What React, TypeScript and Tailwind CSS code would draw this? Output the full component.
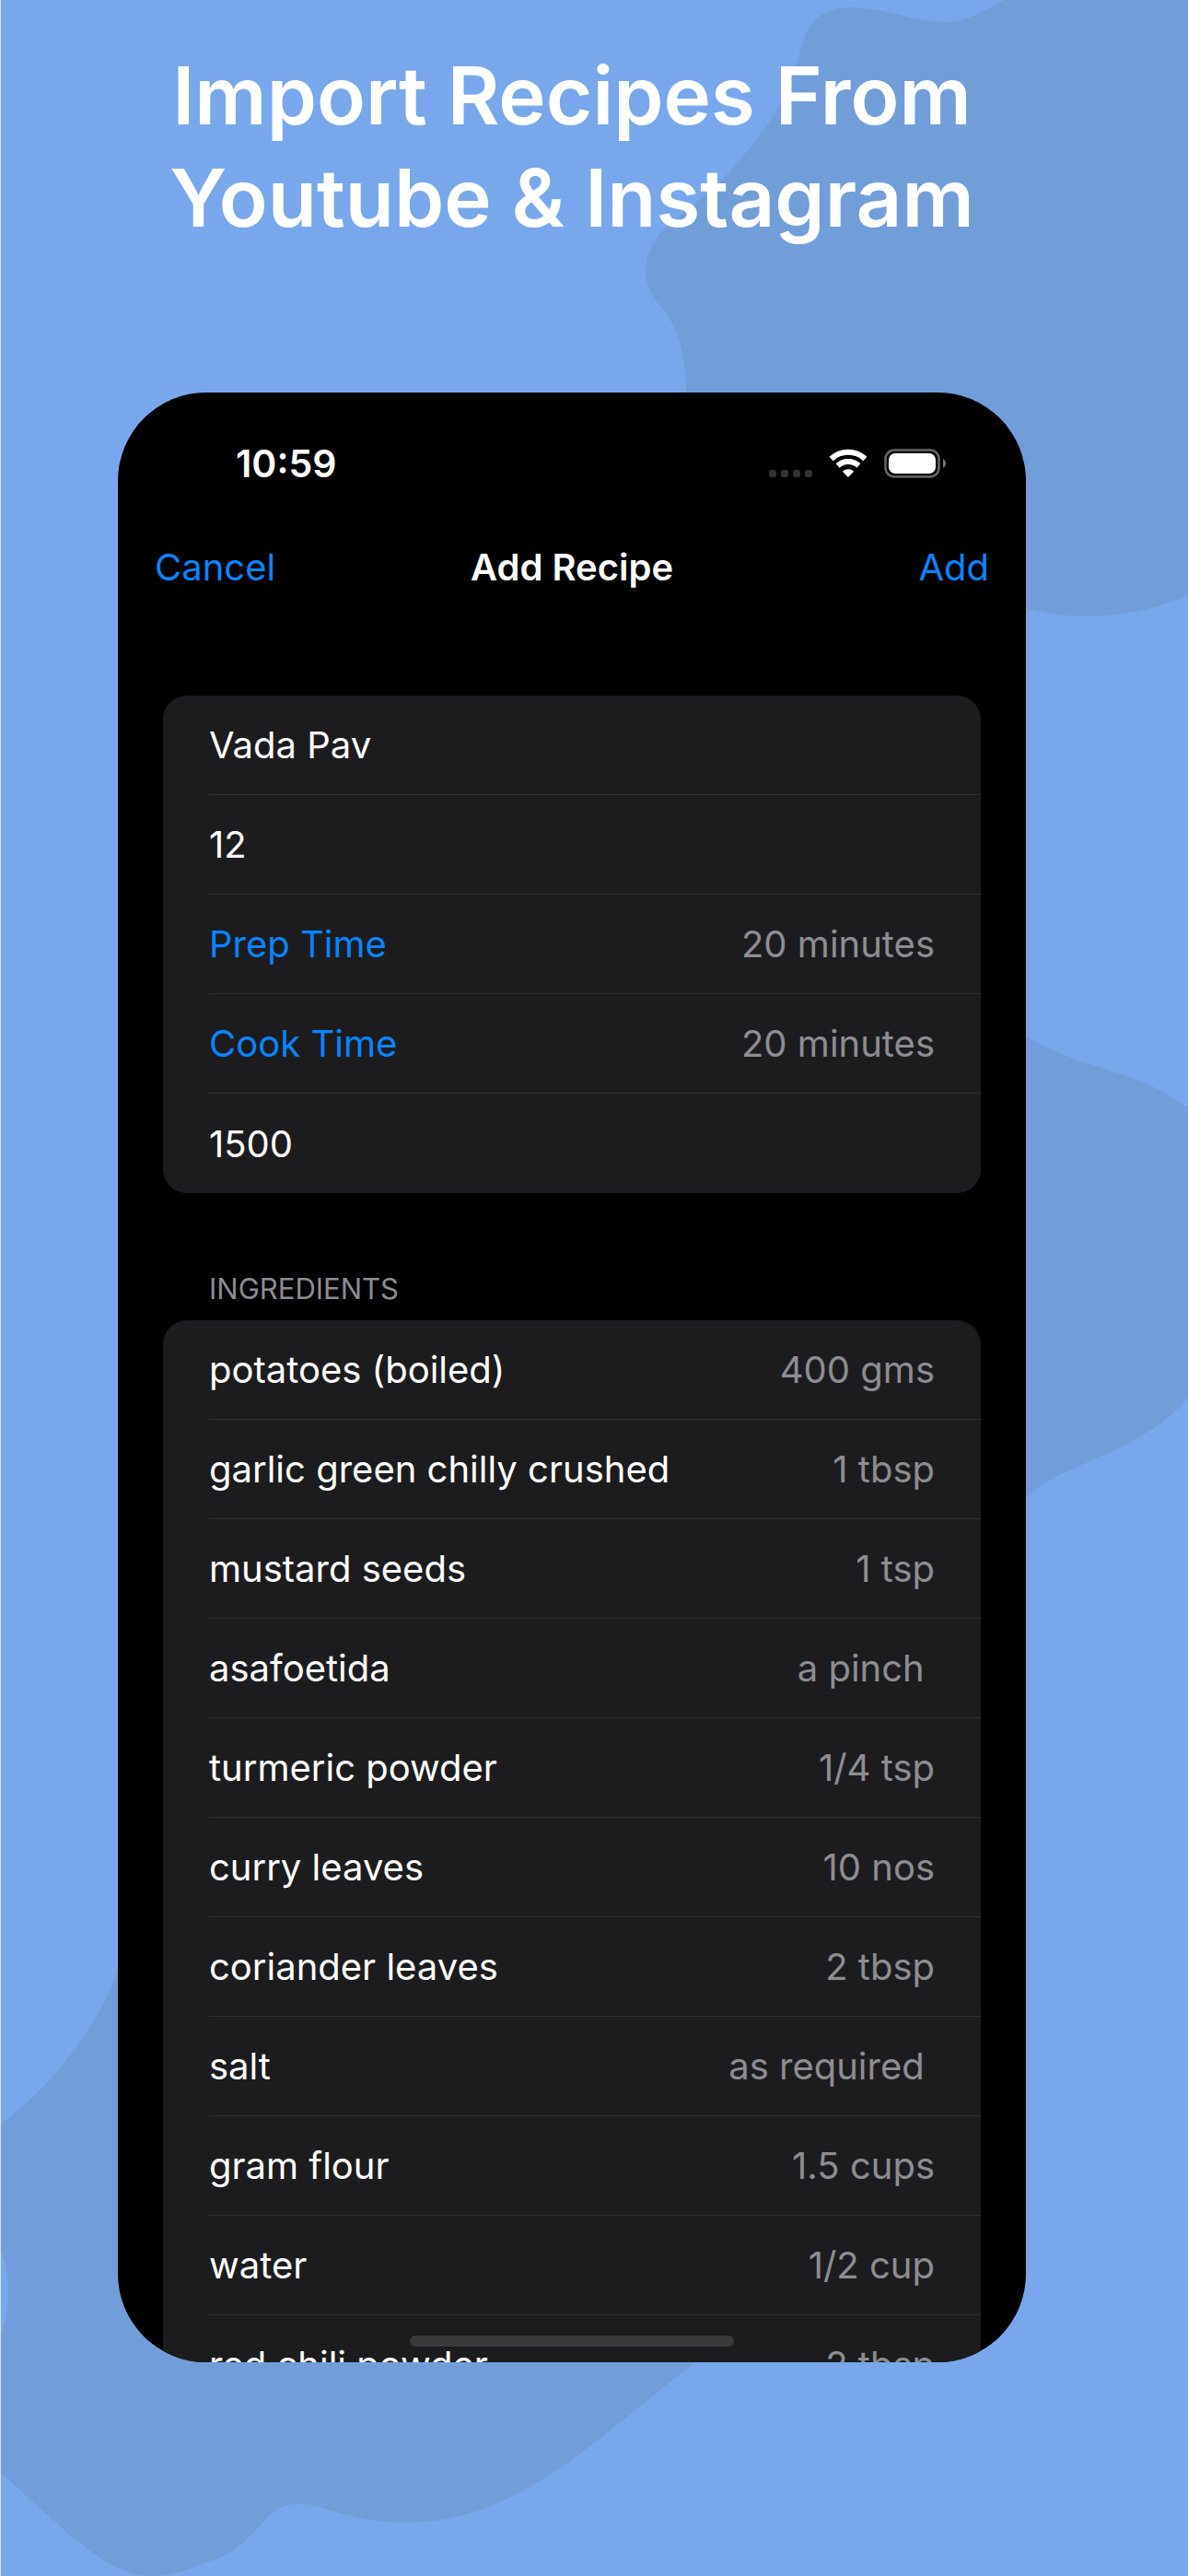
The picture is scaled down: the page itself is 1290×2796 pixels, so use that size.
import { useState } from 'react'

type Ingredient = {
  name: string
  amount: string
}

const ingredients: Ingredient[] = [
  { name: 'potatoes (boiled)', amount: '400 gms' },
  { name: 'garlic green chilly crushed', amount: '1 tbsp' },
  { name: 'mustard seeds', amount: '1 tsp' },
  { name: 'asafoetida', amount: 'a pinch ' },
  { name: 'turmeric powder', amount: '1/4 tsp' },
  { name: 'curry leaves', amount: '10 nos' },
  { name: 'coriander leaves', amount: '2 tbsp' },
  { name: 'salt', amount: 'as required ' },
  { name: 'gram flour', amount: '1.5 cups' },
  { name: 'water', amount: '1/2 cup' },
  { name: 'red chili powder', amount: '2 tbsp' },
]

const Background = () => (
  <svg
    className="absolute inset-0 h-full w-full"
    viewBox="0 0 1290 2796"
    preserveAspectRatio="none"
    fill="#719ed9"
    aria-hidden="true"
  >
    <path d="M1090 0C1068 12 1048 24 1027 24C992 24 960 8 923 8C896 8 879 22 873 42C865 68 858 96 837 130C820 153 802 177 783 196C763 213 742 232 722 248C709 260 701 278 701 295C701 310 709 322 718 334C734 352 745 380 745 426V600H1114V660C1134 666 1158 669 1181 669C1220 669 1260 660 1290 646V0Z" />
    <path d="M1114 1124C1140 1140 1166 1150 1190 1157C1225 1168 1260 1179 1290 1203V1518C1261 1551 1220 1571 1170 1592C1150 1600 1130 1611 1114 1624H1000V1124Z" />
    <path d="M128 2140C103 2203 60 2261 0 2306V2440C12 2468 12 2508 0 2536V2683C26 2707 50 2728 75 2751C115 2783 135 2796 168 2796C190 2796 210 2786 230 2779C247 2774 258 2766 268 2756C280 2746 286 2735 295 2728C303 2721 314 2718 325 2718C352 2718 380 2738 442 2738C560 2738 640 2653 755 2564V2400H128Z" />
  </svg>
)

const WifiIcon = () => (
  <svg width="42" height="32" viewBox="0 0 42 32" fill="none" stroke="#fff" aria-hidden="true">
    <path d="M2.6 11a27 27 0 0 1 36.8 0" strokeWidth="6" />
    <path d="M9.6 18.4a17 17 0 0 1 22.8 0" strokeWidth="6" />
    <path d="M14.8 24.8a9 9 0 0 1 12.4 0L21 31Z" fill="#fff" stroke="none" />
  </svg>
)

const BatteryIcon = () => (
  <svg width="68" height="32" viewBox="0 0 68 32" fill="none" aria-hidden="true">
    <rect x="1.5" y="1.5" width="58" height="29" rx="9.5" stroke="#666" strokeWidth="2.5" />
    <rect x="5" y="5" width="51" height="22" rx="7" fill="#fff" />
    <path d="M64 11c4 2 4 8 0 10Z" fill="#777" />
  </svg>
)

const StatusBar = () => (
  <div className="flex h-[154px] items-center justify-between pr-[86px] pl-32">
    <span className="text-[41px] leading-none font-semibold text-white">10:59</span>
    <div className="flex items-center">
      <div className="mr-[18px] flex gap-[5px] pt-[22px]">
        <span className="size-2 rounded-[3px] bg-[#333]" />
        <span className="size-2 rounded-[3px] bg-[#333]" />
        <span className="size-2 rounded-[3px] bg-[#333]" />
        <span className="size-2 rounded-[3px] bg-[#333]" />
      </div>
      <div className="mr-[18px]">
        <WifiIcon />
      </div>
      <BatteryIcon />
    </div>
  </div>
)

type FieldProps = {
  label: string
  value: string
  onChange: (value: string) => void
}

const Field = ({ label, value, onChange }: FieldProps) => (
  <input
    type="text"
    aria-label={label}
    value={value}
    onChange={(e) => onChange(e.target.value)}
    className="block h-27 w-full border-b border-[#303033] pr-[50px] text-white outline-none last:border-b-0"
  />
)

const TimeRow = ({ label, value }: { label: string; value: string }) => (
  <button
    type="button"
    className="flex h-27 w-full items-center justify-between border-b border-[#303033] pr-[50px]"
  >
    <span className="text-[#0a84ff]">{label}</span>
    <span className="text-[#8d8d92]">{value}</span>
  </button>
)

const App = () => {

  const [title, setTitle] = useState<string>('Vada Pav')
  const [servings, setServings] = useState<string>('12')
  const [calories, setCalories] = useState<string>('1500')

  return (
    <div className="relative h-screen overflow-hidden bg-[#78a8eb] font-['Inter',sans-serif]">
      <Background />
      <div className="absolute inset-y-0 left-0 w-px bg-[#d5e1f3]" />

      <div className="relative flex h-full flex-col pr-12 pb-58">
        {/* Headline */}
        <h1 className="h-[426px] shrink-0 pt-12 text-center text-[87px] leading-[111px] font-semibold text-white">
          Import Recipes From
          <br />
          Youtube &amp; Instagram
        </h1>

        {/* Phone screen */}
        <main className="relative mx-32 min-h-0 flex-1 overflow-hidden rounded-[96px] bg-black text-[40px] leading-[52px]">
          <StatusBar />

          <header className="mx-10 mt-1 grid h-16 grid-cols-3 items-center">
            <button type="button" className="justify-self-start text-[#0a84ff]">Cancel</button>
            <h2 className="justify-self-center font-semibold whitespace-nowrap text-white">Add Recipe</h2>
            <button type="button" className="justify-self-end text-[#0a84ff]">Add</button>
          </header>

          <section className="mx-[49px] mt-[107px] rounded-[26px] bg-[#1c1c1e] pl-[50px]">
            <Field label="Recipe name" value={title} onChange={setTitle} />
            <Field label="Servings" value={servings} onChange={setServings} />
            <TimeRow label="Prep Time" value="20 minutes" />
            <TimeRow label="Cook Time" value="20 minutes" />
            <Field label="Calories" value={calories} onChange={setCalories} />
          </section>

          <h3 className="mt-[82px] mb-3 px-[99px] text-[31px] leading-[44px] text-[#8d8d92]">INGREDIENTS</h3>

          <ul className="mx-[49px] rounded-t-[26px] bg-[#1c1c1e] pl-[50px]">
            {ingredients.map((item) => (
              <li
                key={item.name}
                className="flex h-27 items-center justify-between border-b border-[#303033] pr-[50px]"
              >
                <span className="text-white">{item.name}</span>
                <span className="whitespace-pre text-[#8d8d92]">{item.amount}</span>
              </li>
            ))}
          </ul>

          {/* Home indicator */}
          <div className="absolute bottom-[17px] left-1/2 h-3 w-88 -translate-x-1/2 rounded-full bg-[#3a3a3b]" />
        </main>
      </div>
    </div>
  )
}

export default App
